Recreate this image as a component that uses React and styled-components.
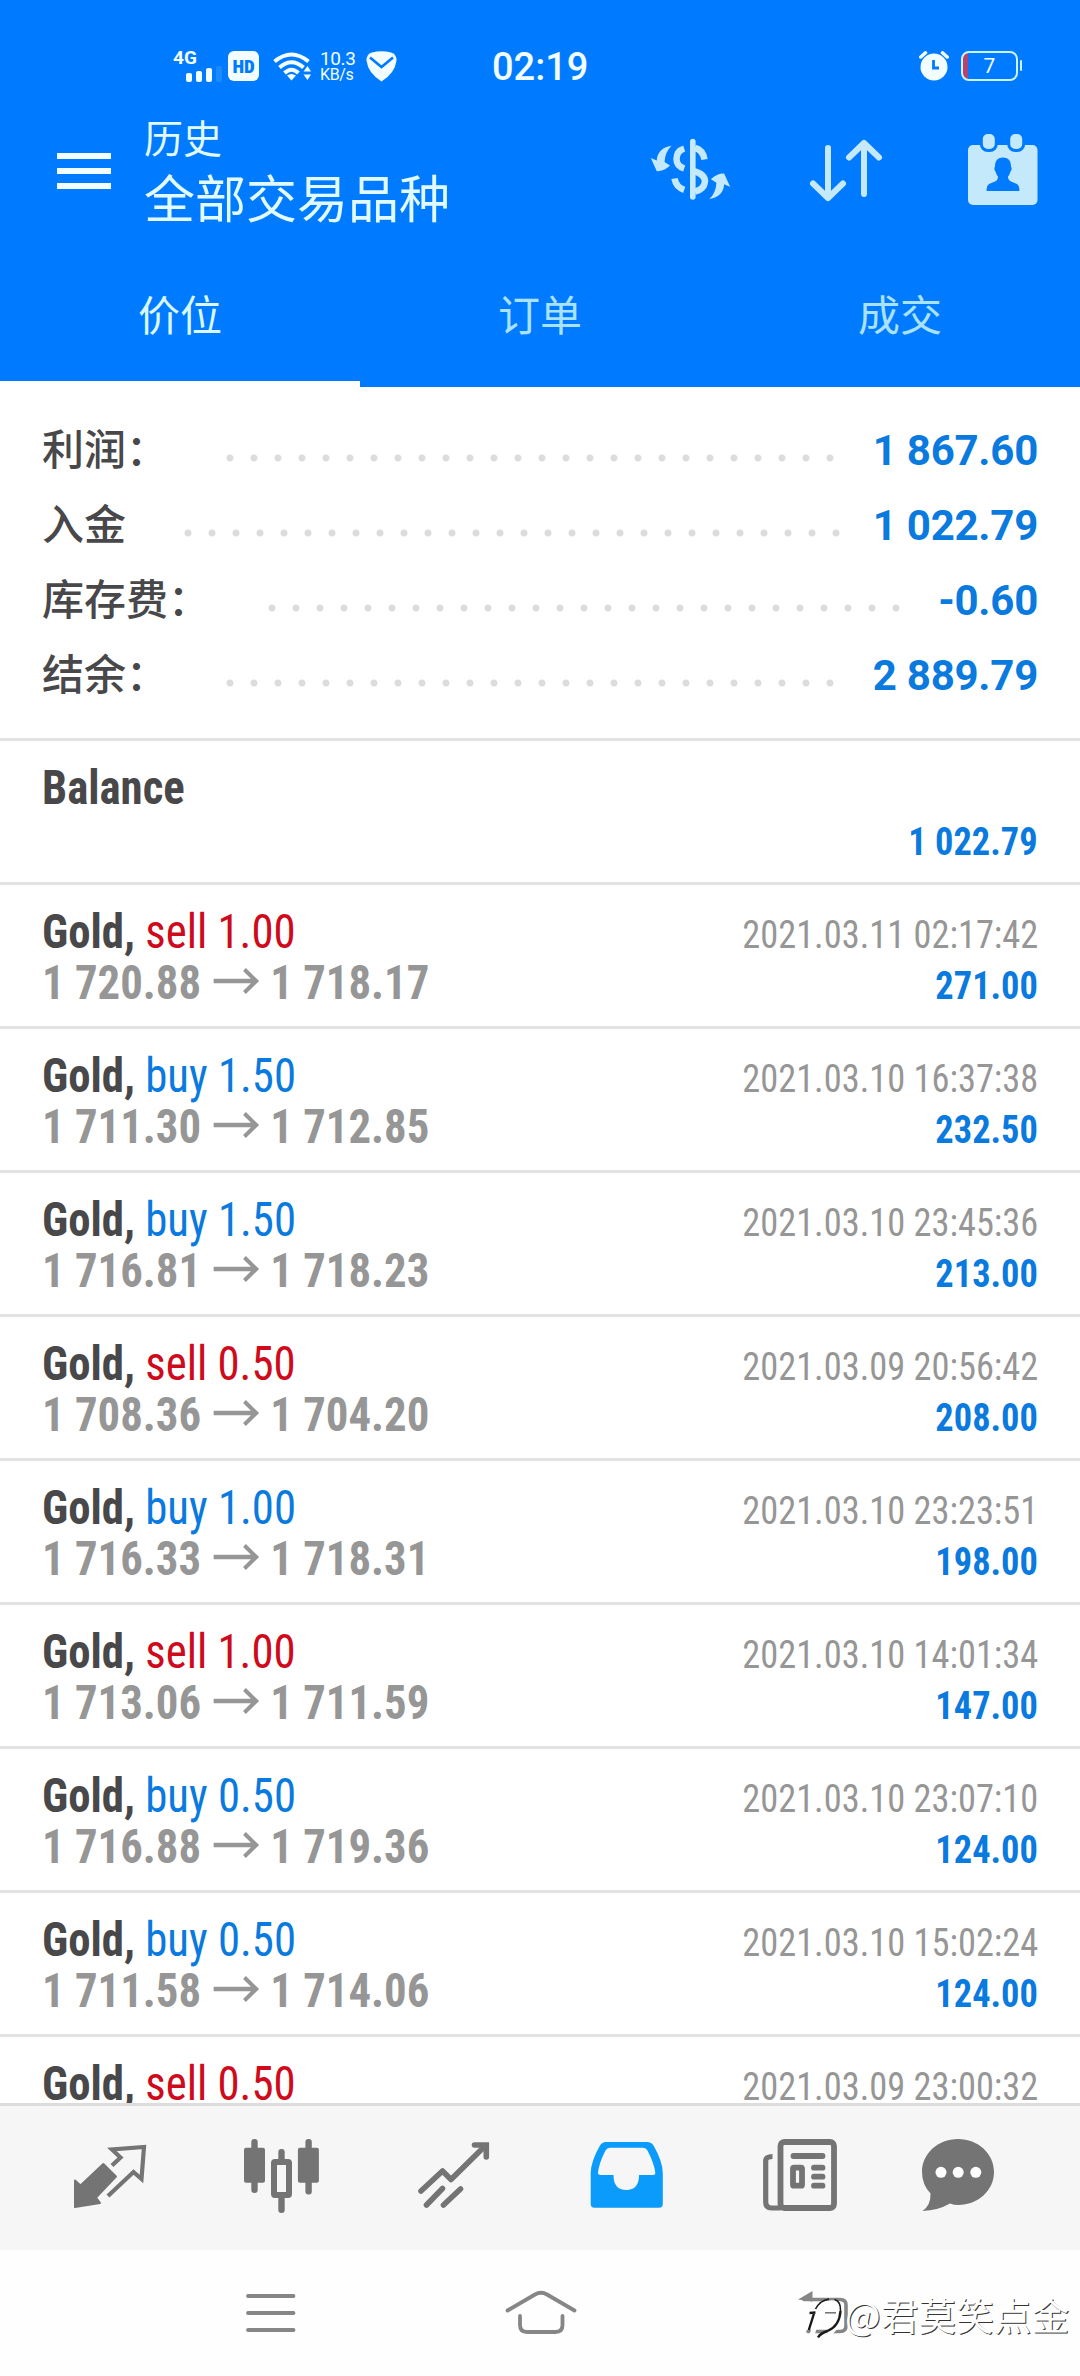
import React from "react";
import styled, { createGlobalStyle } from "styled-components";

const BLUE = "#007bff";
const VALUE = "#0a7adf";
const SELL = "#ce0a1c";
const GREY = "#969696";
const SANS = 'Roboto, "Noto Sans CJK SC", sans-serif';
const CONDENSED = '"Roboto Condensed", Roboto, "Noto Sans CJK SC", sans-serif';

const GlobalStyle = createGlobalStyle`
  * { box-sizing: border-box; }
  body { margin: 0; background: #fff; font-family: ${SANS}; }
  svg { display: block; flex: none; }
`;

const Screen = styled.div`
  width: 1080px;
  height: 2376px;
  display: flex;
  flex-direction: column;
  background: #fff;
  overflow: hidden;
`;

/* ---------- status bar ---------- */

const Header = styled.header`
  flex: none;
  height: 387px;
  background: ${BLUE};
  color: #f2fdff;
`;

const StatusBar = styled.div`
  height: 104px;
  padding: 28px 62px 0 173px;
  display: grid;
  grid-template-columns: 319px 1fr auto;
  align-items: center;
`;

const StatusGroup = styled.div`
  display: flex;
  align-items: center;
`;

const Signal = styled.div`
  width: 49px;
  height: 32px;
  display: flex;
  flex-direction: column;
`;

const NetworkType = styled.span`
  font-size: 19px;
  line-height: 16px;
  font-weight: 700;
`;

const Bars = styled.div`
  display: flex;
  align-items: flex-end;
  gap: 4px;
  margin: -1px 0 0 13px;
  height: 17px;
`;

const Bar = styled.i`
  width: 6px;
  height: ${(p) => p.$h}px;
  border-radius: 2px;
  background: ${(p) => (p.$off ? "#1a8bff" : "#f2fdff")};
`;

const HdBadge = styled.span`
  width: 31px;
  height: 30px;
  margin: 0 14px 0 6px;
  border-radius: 6px;
  background: #f2fdff;
  color: ${BLUE};
  font-size: 19px;
  font-weight: 900;
  font-family: ${CONDENSED};
  line-height: 31px;
  text-align: center;
`;

const Speed = styled.div`
  width: 37px;
  margin: 0 9px;
  display: flex;
  flex-direction: column;
  font-size: 19px;
  line-height: 16px;
  letter-spacing: -0.4px;
  padding-top: 2px;
`;

const SpeedUnit = styled.small`
  font-size: 16px;
  line-height: 16px;
`;

const Clock = styled.time`
  padding-top: 1px;
  font-size: 38px;
  line-height: 40px;
  font-weight: 500;
`;

const Battery = styled.div`
  position: relative;
  width: 57px;
  height: 30px;
  margin-left: 12px;
  border: 2.5px solid #c9f4ff;
  border-radius: 8px;
  background: linear-gradient(90deg, #b5436d 0 5px, transparent 5px);
  font-size: 21px;
  line-height: 26px;
  text-align: center;

  &::after {
    content: "";
    position: absolute;
    right: -6px;
    top: 7px;
    width: 2.5px;
    height: 11px;
    border-radius: 2px;
    background: #c9f4ff;
  }
`;

/* ---------- app bar ---------- */

const AppBar = styled.div`
  height: 149px;
  padding: 10px 41px 0 57px;
  display: flex;
  align-items: flex-start;
`;

const Burger = styled.div`
  width: 54px;
  height: 36px;
  margin: 39px 33px 0 0;
  display: flex;
  flex-direction: column;
  justify-content: space-between;
`;

const BurgerLine = styled.i`
  height: 6px;
  background: #f2fdff;
`;

const Titles = styled.div`
  flex: 1;
  color: #e0faff;
`;

const Overline = styled.div`
  font-size: 39px;
  line-height: 53px;
`;

const Title = styled.div`
  font-size: 51px;
  line-height: 67px;
`;

const Actions = styled.div`
  display: flex;
  padding-top: 19px;
  color: #c4e9fb;
`;

const Action = styled.div`
  margin-right: ${(p) => p.$after || 0}px;
  margin-top: ${(p) => p.$top || 0}px;
`;

const Tabs = styled.nav`
  height: 134px;
  display: grid;
  grid-template-columns: repeat(3, 1fr);
`;

const Tab = styled.div`
  font-size: 42px;
  line-height: 128px;
  text-align: center;
  color: ${(p) => (p.$active ? "#d8f7ff" : "#a9e2ff")};
  border-bottom: 6px solid ${(p) => (p.$active ? "#fff" : "transparent")};
`;

/* ---------- summary ---------- */

const Summary = styled.section`
  flex: none;
  height: 351px;
  padding: 26px 42px 0;
`;

const SummaryRow = styled.div`
  display: flex;
  height: 75px;
  line-height: 75px;
  font-size: 42px;
`;

const SummaryLabel = styled.span`
  color: #48484a;
  font-weight: 500;
`;

const Dots = styled.span`
  width: ${(p) => p.$count * 24}px;
  height: 8px;
  margin: 41px 0 0 50px;
  background: radial-gradient(circle at center, #dcdcdc 3px, transparent 4px) 0 0 / 24px 8px;
`;

const SummaryValue = styled.span`
  margin-left: auto;
  color: ${VALUE};
  font-weight: 700;
  letter-spacing: -0.25px;
`;

/* ---------- deals ---------- */

const Deals = styled.section`
  flex: 1;
  min-height: 0;
  overflow: hidden;
  font-family: ${CONDENSED};
`;

const Deal = styled.article`
  height: 144px;
  padding: 21px 42px 0;
  border-top: 3px solid #e3e3e3;
`;

const Line = styled.div`
  display: flex;
  align-items: baseline;
  justify-content: space-between;
  height: 51px;
  font-size: 48px;
  line-height: 51px;
  white-space: pre;

  &::before {
    content: "\\200b";
    width: 0;
  }
`;

const Narrow = styled.span`
  transform: scaleX(0.933);
  transform-origin: ${(p) => (p.$end ? "right" : "left")};
  margin-${(p) => (p.$end ? "left" : "right")}: auto;
`;

const Instrument = styled(Narrow)`
  font-weight: 700;
  color: #48484a;
`;

const Side = styled.span`
  font-weight: 400;
  color: ${(p) => (p.$sell ? SELL : VALUE)};
`;

const Prices = styled(Narrow)`
  display: flex;
  align-items: baseline;
  gap: 12px;
  font-weight: 700;
  color: ${GREY};
`;

const Time = styled(Narrow)`
  font-size: 39px;
  color: ${GREY};
`;

const Amount = styled(Narrow)`
  font-size: 39px;
  font-weight: 700;
  color: ${VALUE};
`;

/* ---------- bottom bars ---------- */

const TabBar = styled.nav`
  flex: none;
  height: 147px;
  padding: 29px 0 0 24px;
  display: flex;
  background: #f6f6f6;
  border-top: 3px solid #dcdcdc;
  color: #747474;
`;

const TabItem = styled.div`
  width: ${(p) => p.$w || 172}px;
  display: flex;
  justify-content: center;
  color: ${(p) => (p.$active ? "#0a9bfb" : "inherit")};
`;

const SystemNav = styled.nav`
  position: relative;
  flex: none;
  height: 126px;
  padding: 0 135px;
  display: grid;
  grid-template-columns: repeat(3, 270px);
  align-items: center;
  justify-items: center;
  background: #fefefe;
  color: #868686;
`;

const Watermark = styled.div`
  position: absolute;
  left: 807px;
  top: 38px;
  display: flex;
  align-items: center;
  font-size: 37.7px;
  line-height: 48px;
  font-family: "Noto Sans CJK SC", sans-serif;
  color: #fff;
  text-shadow: 1px 1px 0 #333;
  white-space: nowrap;
`;

const line = { fill: "none", stroke: "currentColor", strokeLinecap: "round", strokeLinejoin: "round" };

const WifiIcon = () => (
  <svg width="38" height="30" viewBox="0 0 38 30">
    <g {...line} strokeWidth="4" strokeLinecap="butt">
      <path d="M1.500 10.500Q18.500 -3.500 35.500 10.500" />
      <path d="M6.500 16.500Q18.500 6 30.500 16.500" />
      <path d="M11.500 22Q18.500 15.500 25.500 22" />
    </g>
    <path d="M14 24.500Q18.500 21.500 23 24.500L18.500 29.500Z" fill="currentColor" />
    <path d="M30.500 20.500L34.500 15L38 20.500ZM30.500 23.500L34.500 29L38 23.500Z" fill="currentColor" />
  </svg>
);

const ShieldIcon = () => (
  <svg width="31" height="31" viewBox="0 0 31 31">
    <path d="M6 1.500Q15.500 -1 25 1.500Q30.500 3 30.500 9.500Q29 22 15.500 30.500Q2 22 .5 9.500Q.5 3 6 1.500Z" fill="currentColor" />
    <path d="M4 6.500L15.500 16L27 6.500" fill="none" stroke={BLUE} strokeWidth="2.600" />
  </svg>
);

const AlarmIcon = () => (
  <svg width="30" height="30" viewBox="0 0 30 30">
    <circle cx="15" cy="16" r="13.500" fill="currentColor" />
    <path d="M1.800 6L6.500 1.800M28.200 6L23.500 1.800" {...line} strokeWidth="3.500" />
    <path d="M14.500 9V17H20" fill="none" stroke={BLUE} strokeWidth="2.800" />
  </svg>
);

const CurrencyIcon = () => {
  const arrow = "M21.500 7.700C12 9 7 15 6.800 22.500L.8 20L6.800 33.200Q14 33.500 20 27.500L14.500 24Q15 14 21.500 7.700Z";
  return (
    <svg width="80" height="64" viewBox="0 0 80 64">
      <path d={arrow} fill="currentColor" />
      <path d={arrow} fill="currentColor" transform="rotate(180 40.450 34.350)" />
      <path d="M42.800 3.500V59" {...line} strokeWidth="5.600" />
      <g {...line} strokeWidth="6.500" strokeLinecap="butt">
        <path d="M34.200 10.500Q26.500 13 26.500 21Q26.500 28 34.200 30.500" />
        <path d="M24.500 40.500Q26 49 34.200 51.800" />
        <path d="M45 10Q53 12 54.500 21.500" />
        <path d="M43 33Q55 36 55 43.500Q54 51.500 45 53.500" />
      </g>
    </svg>
  );
};

const SortIcon = () => (
  <svg width="76" height="66" viewBox="0 0 76 66">
    <path d="M20 10V59M5 45.500L20 60L35 45.500M56 56V5M41 19.500L56 5L71 19.500" {...line} strokeWidth="6" />
  </svg>
);

const CalendarIcon = () => (
  <svg width="72" height="74" viewBox="0 0 72 74">
    <rect x="1" y="12" width="69.500" height="60" rx="5" fill="currentColor" />
    <g fill="currentColor" stroke={BLUE} strokeWidth="3">
      <rect x="14.300" y="-.5" width="15" height="18" rx="6.500" />
      <rect x="41.700" y="-.5" width="15" height="18" rx="6.500" />
    </g>
    <path
      d="M36 24.500C42 24.500 44 28.500 44 33.500Q45.500 36 43.500 38.500Q42.500 42 41 43.500Q41 47 44 48.500L50 51Q53 53 52.300 58H19.700Q19 53 22 51L28 48.500Q31 47 31 43.500Q29.500 42 28.500 38.500Q26.500 36 28 33.500C28 28.500 30 24.500 36 24.500Z"
      fill={BLUE}
    />
  </svg>
);

const ArrowIcon = () => (
  <svg width="50" height="32" viewBox="0 0 50 32">
    <path d="M1 14H46M34 2.500L46.500 14L34 25.500" fill="none" stroke="currentColor" strokeWidth="4.400" />
  </svg>
);

const QuotesIcon = () => (
  <svg width="80" height="80" viewBox="0 0 80 80">
    <path d="M5 45.500L10.500 50.500L33.300 29L46 41.500L26 62.500L30 68L5 72Z" fill="currentColor" stroke="currentColor" strokeWidth="2" strokeLinejoin="round" />
    <path d="M42 30.500L50.500 22.500L42 14.500L74 12L71.500 44L63.500 37L38 61" fill="none" stroke="currentColor" strokeWidth="4.200" />
  </svg>
);

const CandlesIcon = () => (
  <svg width="80" height="80" viewBox="0 0 80 80" fill="currentColor">
    <rect x="2" y="12.700" width="21" height="35" rx="2" />
    <rect x="9.300" y="4" width="6.400" height="54" rx="3" />
    <rect x="55.900" y="12.700" width="21" height="35" rx="2" />
    <rect x="63.400" y="4" width="6.400" height="55.500" rx="3" />
    <rect x="36.300" y="14" width="6.400" height="14" rx="3" />
    <rect x="36.300" y="59" width="6.400" height="19" rx="3" />
    <rect x="32" y="27" width="15" height="33" rx="1" fill="none" stroke="currentColor" strokeWidth="6" />
  </svg>
);

const TrendIcon = () => (
  <svg width="80" height="80" viewBox="0 0 80 80">
    <g {...line} strokeWidth="5.600">
      <path d="M7 56L28.500 36L37 44.500L71 11" />
      <path d="M60.500 10H72.300V22" strokeLinejoin="miter" />
      <path d="M28.500 53.500L12.500 70M46.500 54L29.500 70" />
    </g>
  </svg>
);

const InboxIcon = () => (
  <svg width="80" height="80" viewBox="0 0 80 80">
    <path
      fill="currentColor"
      fillRule="evenodd"
      d="M20 7H61Q65.500 7 67.500 10.500Q76.500 26 76.800 38V69Q76.800 72.700 73 72.700H8.500Q4.700 72.700 4.700 69V38Q5 26 14 10.500Q16 7 20 7ZM24 12.700Q21 12.700 19.500 15.500Q13 28 12 37.500Q12 40 14.500 40H27.500Q27.500 55 40.300 55Q53 55 53 40H67Q69.500 40 69.300 37.500Q68 28 61.500 15.500Q60 12.700 57 12.700Z"
    />
  </svg>
);

const NewsIcon = () => (
  <svg width="80" height="80" viewBox="0 0 80 80">
    <g {...line} strokeWidth="5.800">
      <rect x="22.500" y="7" width="53.500" height="66" rx="4" />
      <path d="M14.500 21.500Q7.700 21.500 7.700 26V67Q7.700 73 13.500 73H23" strokeWidth="5.200" strokeLinecap="butt" />
      <path d="M35.500 21H64.500M56 32.700H64.500M56 41.700H64.500M56 50.700H64.500" />
      <rect x="35" y="32.700" width="9" height="18" rx="1" />
    </g>
  </svg>
);

const ChatIcon = () => (
  <svg width="80" height="80" viewBox="0 0 80 80">
    <path
      fill="currentColor"
      d="M40 4C60 4 76 18.500 76 37C76 55.500 60 70 40 70Q36 70 32 68.500Q20 75.500 4.500 76Q13 70 12.500 58.500Q4 49.500 4 37C4 18.500 20 4 40 4Z"
    />
    <g fill="#fff">
      <circle cx="23" cy="37.300" r="5.500" />
      <circle cx="40.200" cy="37.300" r="5.500" />
      <circle cx="57.800" cy="37.300" r="5.500" />
    </g>
  </svg>
);

const RecentsIcon = () => (
  <svg width="100" height="80" viewBox="0 0 100 80">
    <path d="M28 23H73.500M28 40H73.500M28 57H73.500" {...line} strokeWidth="3.800" />
  </svg>
);

const HomeIcon = () => (
  <svg width="100" height="80" viewBox="0 0 100 80">
    <path d="M17.500 37.500L45 21.500Q51 18 57 21.500L84.500 37.500" {...line} strokeWidth="3.800" />
    <path d="M30 43V52Q30 59 37 59H65.500Q72.500 59 72.500 52V43" {...line} strokeWidth="3.800" />
  </svg>
);

const BackIcon = () => (
  <svg width="100" height="80" viewBox="0 0 100 80">
    <path d="M38 26.500L52.500 18V28.500Z" fill="currentColor" />
    <path d="M44 26.500H80Q86 26.500 86 32V53Q86 58.500 80 58.500H48" {...line} strokeWidth="3.600" />
  </svg>
);

const WatermarkLogo = () => (
  <svg width="38" height="52" viewBox="0 -2 38 52">
    <g fill="none" stroke="#fff" strokeWidth="5">
      <path d="M5 26H11L5 45M12 22Q17 11 28 13Q36 20 32 33Q24 44 14 49" />
    </g>
    <g fill="none" stroke="#1a1a1a">
      <path d="M2.500 23L8.500 22.500M7 23.500L1.800 40" strokeWidth="2.400" />
      <path d="M8.500 19Q13 10.500 22 9" strokeWidth="1.600" />
      <path d="M27.500 9.500Q34 11.500 33.500 21" strokeWidth="1.600" />
      <path d="M33.500 21Q32.500 36 20.500 41Q13 43.500 11 47.500" strokeWidth="2.400" />
      <path d="M18 22.800H29" strokeWidth="1.600" stroke="#777" />
    </g>
  </svg>
);

const summary = [
  { label: "利润：", dots: 26, value: "1 867.60" },
  { label: "入金", dots: 28, value: "1 022.79" },
  { label: "库存费：", dots: 27, value: "-0.60" },
  { label: "结余：", dots: 26, value: "2 889.79" },
];

const deals = [
  { side: "sell", lots: "1.00", open: "1 720.88", close: "1 718.17", time: "2021.03.11 02:17:42", amount: "271.00" },
  { side: "buy", lots: "1.50", open: "1 711.30", close: "1 712.85", time: "2021.03.10 16:37:38", amount: "232.50" },
  { side: "buy", lots: "1.50", open: "1 716.81", close: "1 718.23", time: "2021.03.10 23:45:36", amount: "213.00" },
  { side: "sell", lots: "0.50", open: "1 708.36", close: "1 704.20", time: "2021.03.09 20:56:42", amount: "208.00" },
  { side: "buy", lots: "1.00", open: "1 716.33", close: "1 718.31", time: "2021.03.10 23:23:51", amount: "198.00" },
  { side: "sell", lots: "1.00", open: "1 713.06", close: "1 711.59", time: "2021.03.10 14:01:34", amount: "147.00" },
  { side: "buy", lots: "0.50", open: "1 716.88", close: "1 719.36", time: "2021.03.10 23:07:10", amount: "124.00" },
  { side: "buy", lots: "0.50", open: "1 711.58", close: "1 714.06", time: "2021.03.10 15:02:24", amount: "124.00" },
  { side: "sell", lots: "0.50", time: "2021.03.09 23:00:32" },
];

export default function App() {
  return (
    <Screen>
      <GlobalStyle />
      <Header>
        <StatusBar>
          <StatusGroup>
            <Signal>
              <NetworkType>4G</NetworkType>
              <Bars>
                <Bar $h={9} />
                <Bar $h={11} />
                <Bar $h={14} />
                <Bar $h={16} $off />
              </Bars>
            </Signal>
            <HdBadge>HD</HdBadge>
            <WifiIcon />
            <Speed>
              10.3
              <SpeedUnit>KB/s</SpeedUnit>
            </Speed>
            <ShieldIcon />
          </StatusGroup>
          <Clock>02:19</Clock>
          <StatusGroup>
            <AlarmIcon />
            <Battery>7</Battery>
          </StatusGroup>
        </StatusBar>
        <AppBar>
          <Burger>
            <BurgerLine />
            <BurgerLine />
            <BurgerLine />
          </Burger>
          <Titles>
            <Overline>历史</Overline>
            <Title>全部交易品种</Title>
          </Titles>
          <Actions>
            <Action $after={78} $top={5}><CurrencyIcon /></Action>
            <Action $after={83} $top={5}><SortIcon /></Action>
            <Action><CalendarIcon /></Action>
          </Actions>
        </AppBar>
        <Tabs>
          <Tab $active>价位</Tab>
          <Tab>订单</Tab>
          <Tab>成交</Tab>
        </Tabs>
      </Header>

      <Summary>
        {summary.map((s) => (
          <SummaryRow key={s.label}>
            <SummaryLabel>{s.label}</SummaryLabel>
            <Dots $count={s.dots} />
            <SummaryValue>{s.value}</SummaryValue>
          </SummaryRow>
        ))}
      </Summary>

      <Deals>
        <Deal>
          <Line><Instrument>Balance</Instrument></Line>
          <Line><Amount $end>1 022.79</Amount></Line>
        </Deal>
        {deals.map((d) => (
          <Deal key={d.time}>
            <Line>
              <Instrument>Gold, <Side $sell={d.side === "sell"}>{d.side} {d.lots}</Side></Instrument>
              <Time $end>{d.time}</Time>
            </Line>
            {d.open && (
              <Line>
                <Prices>{d.open}<ArrowIcon />{d.close}</Prices>
                <Amount $end>{d.amount}</Amount>
              </Line>
            )}
          </Deal>
        ))}
      </Deals>

      <TabBar>
        <TabItem><QuotesIcon /></TabItem>
        <TabItem><CandlesIcon /></TabItem>
        <TabItem><TrendIcon /></TabItem>
        <TabItem $active><InboxIcon /></TabItem>
        <TabItem><NewsIcon /></TabItem>
        <TabItem $w={147}><ChatIcon /></TabItem>
      </TabBar>

      <SystemNav>
        <RecentsIcon />
        <HomeIcon />
        <BackIcon />
        <Watermark>
          <WatermarkLogo />
          @君莫笑点金
        </Watermark>
      </SystemNav>
    </Screen>
  );
}
